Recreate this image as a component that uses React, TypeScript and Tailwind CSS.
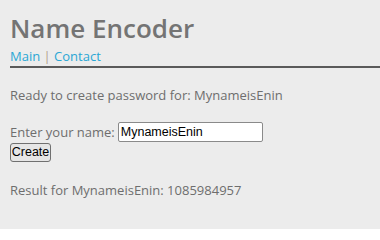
import React from "react";

export default function App() {
  return (
    <div
      className="w-[380px] h-[229px] bg-[#ececec] overflow-hidden text-[#6e6e6e]"
      style={{ fontFamily: '"Open Sans", sans-serif' }}
    >
      <div className="pl-[10px] pt-[11px]">
        <h1 className="text-[26px] leading-[35px] font-semibold text-[#747474]">Name Encoder</h1>
        <div className="text-[13px] leading-[18px] pt-[1px] pb-[1px] border-b-2 border-[#5a5a5a] text-[#2aa7d5]">
          <span>Main</span>
          <span className="text-[#b0a08e]"> | </span>
          <span>Contact</span>
        </div>
        <p className="mt-[18px] text-[13px] leading-[18px]">Ready to create password for: MynameisEnin</p>
        <div className="mt-[18px] flex items-center text-[13px] leading-[18px]">
          <span>Enter your name:</span>
          <input
            className="ml-[3px] w-[145px] h-[20px] bg-white border border-[#8a8a8a] rounded-[2px] px-[2px] text-black text-[12.5px] outline-none"
            style={{ fontFamily: '"Liberation Sans", sans-serif' }}
            defaultValue="MynameisEnin"
          />
        </div>
        <button
          className="block mt-[1px] h-[19px] w-[41px] bg-[#e6e6e6] border border-[#707070] rounded-[3px] text-black text-[12.5px] leading-[17px] p-0"
          style={{ fontFamily: '"Liberation Sans", sans-serif' }}
        >
          Create
        </button>
        <p className="mt-[19px] text-[13px] leading-[18px]">Result for MynameisEnin: 1085984957</p>
      </div>
    </div>
  );
}
